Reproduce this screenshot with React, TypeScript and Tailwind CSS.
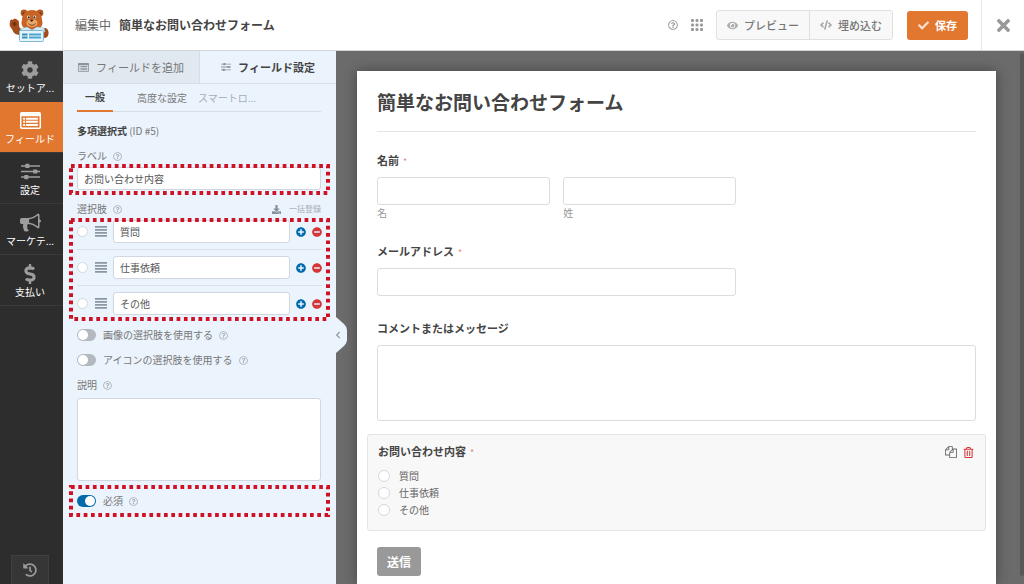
import React, { useState } from 'react';
import {
  FaCheck,
  FaChevronLeft,
  FaCode,
  FaCog,
  FaDollarSign,
  FaDownload,
  FaEye,
  FaHistory,
  FaMinusCircle,
  FaPlusCircle,
  FaRegQuestionCircle,
  FaRegTrashAlt,
  FaTimes,
} from 'react-icons/fa';

interface IconProps {
  className?: string;
}

const Mascot: React.FC = () => (
  <svg className="w-10 h-9" viewBox="0 0 40 36" aria-hidden="true">
    <circle cx="15" cy="6" r="3.4" fill="#b5591f" />
    <circle cx="31" cy="6" r="3.4" fill="#b5591f" />
    <circle cx="15" cy="6.5" r="1.6" fill="#7c3a14" />
    <circle cx="31" cy="6.5" r="1.6" fill="#7c3a14" />
    <path d="M1 15c0-3 2-3 3-2 1-2 4-1 4 0 2 0 2 2 2 5 0 2 1 4 3 4l-2 6c-5 0-7-3-8-6-2-2-3-4-2-7z" fill="#a34d1a" />
    <circle cx="5.500" cy="17" r="2" fill="#70340f" />
    <ellipse cx="36" cy="26" rx="3.6" ry="5" fill="#a34d1a" />
    <path d="M23 3c6 0 10 4 10 10 2 6-2 10-10 10s-12-4-10-10c0-6 4-10 10-10z" fill="#c86526" />
    <ellipse cx="23" cy="16" rx="5.500" ry="4" fill="#e9a868" />
    <circle cx="19.500" cy="10" r="1.5" fill="#fff" />
    <circle cx="25.500" cy="10" r="1.5" fill="#fff" />
    <circle cx="19.700" cy="10.2" r="1" fill="#2b1a10" />
    <circle cx="25.300" cy="10.2" r="1" fill="#2b1a10" />
    <path d="M20.5 12.5h4.4l-2.2 2.4z" fill="#43200d" />
    <path d="M19.5 16.5c2 2.4 5 2.4 7 0" fill="none" stroke="#7c3a14" strokeWidth="1" />
    <path d="M12 22l6-2 5 3 5-3 7 1 1 4H11z" fill="#d8ecf7" stroke="#8fc0da" strokeWidth=".6" />
    <rect x="10.500" y="23.500" width="24" height="11" rx="1" fill="#e4f4fb" stroke="#7fb8d6" />
    <path d="M13 27.500h5.500M13 30.500h5.500" stroke="#3c8dbc" strokeWidth="1.800" />
    <path d="M20 27.500h12M20 30.500h12" stroke="#4fa3cf" strokeWidth="1.800" />
  </svg>
);

const ListIcon: React.FC<IconProps> = ({ className }) => (
  <svg className={className} viewBox="0 0 20 16" fill="currentColor" aria-hidden="true">
    <path
      fillRule="evenodd"
      d="M1.500 0h17A1.500 1.500 0 0 1 20 1.500v13a1.500 1.500 0 0 1-1.500 1.500h-17A1.500 1.500 0 0 1 0 14.500v-13A1.500 1.500 0 0 1 1.500 0zM1.400 4v10.200c0 .3.100.4.400.4h16.400c.3 0 .4-.1.400-.4V4z"
    />
    <path d="M3 5.300h1.800V7.200H3zM5.600 5.300H17V7.200H5.600zM3 8.300h1.800v1.900H3zM5.600 8.300H17v1.900H5.600zM3 11.300h1.800v1.900H3zM5.600 11.300H17v1.900H5.600z" />
  </svg>
);

const SlidersIcon: React.FC<IconProps> = ({ className }) => (
  <svg className={className} viewBox="0 0 18 16" fill="currentColor" aria-hidden="true">
    <path d="M0 2h18v1.500H0zM0 7.300h18v1.500H0zM0 12.500h18V14H0z" />
    <rect x="4" y=".7" width="4" height="4" rx=".8" />
    <rect x="11.500" y="6" width="4" height="4" rx=".8" />
    <rect x="3" y="11.300" width="4" height="4" rx=".8" />
  </svg>
);

const BullhornIcon: React.FC<IconProps> = ({ className }) => (
  <svg className={className} viewBox="0 0 1792 1792" fill="currentColor" aria-hidden="true">
    <path d="M1664 640q53 0 90.5 37.5t37.5 90.5-37.5 90.5-90.5 37.5v384q0 52-38 90t-90 38q-417-347-812-380-58 19-91 66t-31 100.5 40 92.5q-20 33-23 65.5t6 58 33.5 55 48 50 61.5 50.5q-29 58-111.5 83t-168.5 11.5-132-55.5q-7-23-29.5-87.5t-32-94.5-23-89-15-101 3.5-98.5 22-110.5h-122q-66 0-113-47t-47-113v-192q0-66 47-113t113-47h480q435 0 896-384 52 0 90 38t38 90v384zm-128 604v-954q-394 302-768 343v270q377 42 768 341z" />
  </svg>
);

const CopyIcon: React.FC<IconProps> = ({ className }) => (
  <svg className={className} viewBox="0 0 1792 1792" fill="currentColor" aria-hidden="true">
    <path d="M1696 384q40 0 68 28t28 68v1216q0 40-28 68t-68 28h-960q-40 0-68-28t-28-68v-288h-544q-40 0-68-28t-28-68v-672q0-40 20-88t48-76l408-408q28-28 76-48t88-20h416q40 0 68 28t28 68v328q68-40 128-40h416zm-544 213l-299 299h299v-299zm-640-384l-299 299h299v-299zm196 647l316-316v-416h-384v416q0 40-28 68t-68 28h-416v640h512v-256q0-40 20-88t48-76zm956 804v-1152h-384v416q0 40-28 68t-68 28h-416v640h896z" />
  </svg>
);

const DragIcon: React.FC<IconProps> = ({ className }) => (
  <svg className={className} viewBox="0 0 12 11" fill="currentColor" aria-hidden="true">
    <path d="M0 0h12v1.700H0zM0 3h12v1.700H0zM0 6h12v1.700H0zM0 9h12v1.700H0z" />
  </svg>
);

const GridIcon: React.FC<IconProps> = ({ className }) => (
  <svg className={className} viewBox="0 0 12 12" fill="currentColor" aria-hidden="true">
    {[0, 4.5, 9].map(y => [0, 4.5, 9].map(x => <rect key={`${x}-${y}`} x={x} y={y} width="3" height="3" rx="1" />))}
  </svg>
);

const Help: React.FC = () => <FaRegQuestionCircle className="w-[9px] h-[9px] text-[#a9b2ba] shrink-0" />;

// Red dotted frame laid over a group of settings
const Marker: React.FC = () => (
  <svg className="absolute inset-0 w-full h-full pointer-events-none overflow-visible" aria-hidden="true">
    <rect
      x="2"
      y="2"
      fill="none"
      stroke="#cf1126"
      strokeWidth="4"
      strokeDasharray="3.7 3.6"
      style={{ width: 'calc(100% - 4px)', height: 'calc(100% - 4px)' }}
    />
  </svg>
);

const navItems = [
  { label: 'セットア...', icon: <FaCog className="w-[18px] h-[18px]" />, style: 'bg-[#393939] text-[#9d9d9d]' },
  { label: 'フィールド', icon: <ListIcon className="w-[21px] h-[17px]" />, style: 'bg-[#e27730] text-white' },
  { label: '設定', icon: <SlidersIcon className="w-[19px] h-[17px]" />, style: 'text-[#9d9d9d]' },
  { label: 'マーケテ...', icon: <BullhornIcon className="w-[21px] h-[21px]" />, style: 'text-[#9d9d9d]' },
  { label: '支払い', icon: <FaDollarSign className="w-5 h-5" />, style: 'text-[#9d9d9d]' },
];

const choices = ['質問', '仕事依頼', 'その他'];

const inputStyle = 'border border-[#d0d7de] rounded-[3px] bg-white text-[10px] text-[#555] focus:outline-none';
const previewInput = 'w-full h-7 border border-[#dcdcdc] rounded-[3px] bg-white focus:outline-none';
const previewLabel = 'block text-[11px] leading-4 font-bold text-[#444]';
const radioStyle = 'appearance-none shrink-0 border border-[#d5d9dd] rounded-full bg-white checked:bg-[#036aab]';

interface ToggleProps {
  id: string;
  label: string;
  initial?: boolean;
}

const Toggle: React.FC<ToggleProps> = ({ id, label, initial = false }) => {
  const [checked, setChecked] = useState(initial);

  return (
    <div className="flex items-center h-4">
      <input
        id={id}
        type="checkbox"
        checked={checked}
        onChange={e => setChecked(e.target.checked)}
        className="appearance-none w-[19px] h-3 rounded-full bg-[#b3b9bf] checked:bg-[#036aab] p-px before:block before:w-[10px] before:h-[10px] before:rounded-full before:bg-white checked:before:ml-[7px]"
      />
      <label htmlFor={id} className="ml-[7px] mr-[6px] text-[10px] leading-4 text-[#777]">{label}</label>
      <Help />
    </div>
  );
};

const Header: React.FC = () => (
  <header className="flex h-[51px] shrink-0 bg-white border-b border-[#d0d5da]">
    <div className="w-[63px] shrink-0 flex items-center justify-center pr-1 border-r border-[#e4e4e4]">
      <Mascot />
    </div>
    <div className="flex-1 flex items-center pl-3 text-[12px] text-[#666]">
      <span>編集中</span>
      <strong className="ml-2 text-[#444]">簡単なお問い合わせフォーム</strong>
    </div>
    <div className="flex items-center pr-[13px] text-[11px] text-[#777]">
      <button type="button" aria-label="ヘルプ" className="mr-[13px]"><FaRegQuestionCircle className="w-[10px] h-[10px] text-[#999]" /></button>
      <button type="button" aria-label="アプリ" className="mr-[13px]"><GridIcon className="w-3 h-3 text-[#999]" /></button>
      <div className="flex h-[30px] rounded-[3px] border border-[#e0e0e0] bg-[#f8f8f8] mr-[14px]">
        <button type="button" className="flex items-center gap-[6px] px-[10px] border-r border-[#e0e0e0] font-medium">
          <FaEye className="w-[11px] h-[11px] text-[#aaa]" />プレビュー
        </button>
        <button type="button" className="flex items-center gap-[6px] px-[10px] font-medium">
          <FaCode className="w-3 h-3 text-[#aaa]" />埋め込む
        </button>
      </div>
      <button type="button" className="flex items-center gap-[6px] h-[29px] px-[11px] rounded-[3px] bg-[#e27730] text-white font-bold">
        <FaCheck className="w-[11px] h-[11px] text-[#fbe3d3]" />保存
      </button>
    </div>
    <button type="button" aria-label="閉じる" className="w-[43px] flex items-center justify-center border-l border-[#e8e8e8] text-[#999]">
      <FaTimes className="w-[19px] h-[19px]" />
    </button>
  </header>
);

const Sidebar: React.FC = () => (
  <nav className="w-[63px] shrink-0 flex flex-col bg-[#2d2d2d]">
    {navItems.map(item => (
      <button key={item.label} type="button" className={`h-[51px] shrink-0 flex flex-col items-center border-b border-[#3a3a3a] pt-2 pr-[3px] ${item.style}`}>
        <span className="h-[21px] flex items-center">{item.icon}</span>
        <span className="text-[10px] leading-4 text-white whitespace-nowrap">{item.label}</span>
      </button>
    ))}
    <button type="button" aria-label="履歴" className="mt-auto ml-[11px] w-[38px] h-[29px] flex items-center justify-center bg-[#363636] text-[#999] border border-b-0 border-[#404040]">
      <FaHistory className="w-[14px] h-[14px]" />
    </button>
  </nav>
);

const FieldPanel: React.FC = () => (
  <section className="relative z-10 w-[273px] shrink-0 bg-[#ebf3fc] text-[10px] leading-4 text-[#777]">
    <div className="flex h-[33px] text-[11px]">
      <button type="button" className="w-[137px] flex items-center justify-center gap-[7px] bg-[#e0e8f0] border-b border-r border-[#d5dde5]">
        <ListIcon className="w-[11px] h-[9px] text-[#8b939b]" />フィールドを追加
      </button>
      <button type="button" className="flex-1 flex items-center justify-center gap-[7px] border-b border-[#d5dde5] font-bold text-[#444]">
        <SlidersIcon className="w-[10px] h-[10px] text-[#8b939b]" />フィールド設定
      </button>
    </div>

    <div className="pl-[14px] pr-[15px]">
      <div className="flex h-7 border-b border-[#d5dde5]">
        <button type="button" className="h-7 px-2 border-b-2 border-[#e27730] font-bold text-[#444]">一般</button>
        <button type="button" className="ml-6 mr-[11px]">高度な設定</button>
        <button type="button" className="text-[#a5adb5]">スマートロ...</button>
      </div>

      <h2 className="mt-[11px]"><b className="text-[#444]">多項選択式</b> (ID #5)</h2>

      <div className="mt-[9px] flex items-center gap-[6px]">
        <label htmlFor="field-label">ラベル</label>
        <Help />
      </div>
      <div className="relative -ml-2 -mr-[9px] pl-2 pr-[9px] pt-[3px] pb-[5px]">
        <input id="field-label" type="text" defaultValue="お問い合わせ内容" className={`block w-full h-[23px] px-[6px] ${inputStyle}`} />
        <Marker />
      </div>

      <div className="mt-[6px] flex items-center gap-[6px]">
        <span>選択肢</span>
        <Help />
        <button type="button" className="ml-auto flex items-center gap-2 text-[8px] text-[#a5adb5]">
          <FaDownload className="w-[9px] h-[9px] text-[#86919c]" />一括登録
        </button>
      </div>
      <div className="relative mt-px -ml-2 -mr-[9px] pl-2 pr-2">
        <ul className="divide-y divide-[#d9e2ea]">
          {choices.map((choice, i) => (
            <li key={choice} className={`flex items-center ${i === 0 ? 'h-8 pb-1' : i === 1 ? 'h-9' : 'h-[35px]'}`}>
              <input type="radio" name="default-choice" aria-label={`${choice}を初期値にする`} className={`w-[11px] h-[11px] ${radioStyle}`} />
              <DragIcon className="ml-[7px] mr-[6px] w-3 h-[11px] shrink-0 text-[#8b97a3]" />
              <input type="text" aria-label="選択肢" defaultValue={choice} className={`flex-1 min-w-0 h-[23px] px-[6px] ${inputStyle}`} />
              <button type="button" aria-label="追加" className="ml-[6px]"><FaPlusCircle className="w-[10px] h-[10px] text-[#036aab]" /></button>
              <button type="button" aria-label="削除" className="ml-[6px]"><FaMinusCircle className="w-[10px] h-[10px] text-[#d63638]" /></button>
            </li>
          ))}
        </ul>
        <Marker />
      </div>

      <div className="mt-[6px] flex flex-col gap-[9px]">
        <Toggle id="image-choices" label="画像の選択肢を使用する" />
        <Toggle id="icon-choices" label="アイコンの選択肢を使用する" />
        <div className="flex items-center gap-[6px]">
          <label htmlFor="description">説明</label>
          <Help />
        </div>
      </div>
      <textarea id="description" className={`block mt-[5px] w-full h-[83px] resize-none ${inputStyle}`} />

      <div className="relative mt-1 -ml-2 -mr-[9px] px-2 py-2">
        <Toggle id="required" label="必須" initial />
        <Marker />
      </div>
    </div>

    {/* パネルを閉じるつまみ */}
    <button type="button" aria-label="パネルを閉じる" className="absolute left-full top-[266px] w-[11px] h-9">
      <svg className="absolute inset-0 w-full h-full" viewBox="0 0 11 36" aria-hidden="true">
        <path d="M0 0l8 7q3 3 3 6v10q0 3-3 6l-8 7z" fill="#ebf3fc" />
      </svg>
      <FaChevronLeft className="relative -ml-[2px] w-2 h-2 text-[#8b97a3]" />
    </button>
  </section>
);

const Required: React.FC = () => <span className="ml-1 text-[9px] font-normal text-[#d63638]/60">*</span>;

const Preview: React.FC = () => (
  <main className="flex-1 min-w-0 flex bg-[#6b6b6b] overflow-hidden">
    <div className="flex-1 min-w-0 mt-5 ml-[21px] mr-6 px-[10px] bg-white shadow-[0_0_12px_rgba(0,0,0,0.35)]">
      <div className="px-[10px]">
        <h1 className="h-[61px] pt-4 border-b border-[#e5e5e5] text-[19px] leading-[30px] font-bold text-[#444]">簡単なお問い合わせフォーム</h1>

        <fieldset className="mt-5">
          <legend className={previewLabel}>名前<Required /></legend>
          <div className="mt-[7px] w-3/5 flex gap-[13px] text-[10px] leading-4 text-[#999]">
            <div className="flex-1">
              <input id="first-name" type="text" className={`block ${previewInput}`} />
              <label htmlFor="first-name">名</label>
            </div>
            <div className="flex-1">
              <input id="last-name" type="text" className={`block ${previewInput}`} />
              <label htmlFor="last-name">姓</label>
            </div>
          </div>
        </fieldset>

        <label htmlFor="email" className={`mt-[22px] ${previewLabel}`}>メールアドレス<Required /></label>
        <div className="mt-[7px] w-3/5">
          <input id="email" type="email" className={`block ${previewInput}`} />
        </div>

        <label htmlFor="message" className={`mt-6 ${previewLabel}`}>コメントまたはメッセージ</label>
        <textarea id="message" className="block mt-[9px] w-full h-[76px] border border-[#dcdcdc] rounded-[3px] bg-white resize-none focus:outline-none" />
      </div>

      <fieldset className="mt-[13px] h-[97px] px-[10px] pt-2 border border-[#e5e5e5] rounded-[3px] bg-[#f8f8f8]">
        <div className="flex items-center">
          <span className={previewLabel}>お問い合わせ内容<Required /></span>
          <div className="ml-auto mr-px flex items-center gap-[6px]">
            <button type="button" aria-label="複製"><CopyIcon className="w-3 h-3 text-[#666]" /></button>
            <button type="button" aria-label="削除"><FaRegTrashAlt className="w-[11px] h-[11px] text-[#d63638]" /></button>
          </div>
        </div>
        <div className="mt-[6px]">
          {choices.map(choice => (
            <label key={choice} className="flex items-center gap-[9px] h-[17px] text-[10px] text-[#666]">
              <input type="radio" name="inquiry" className={`w-3 h-3 ${radioStyle}`} />
              {choice}
            </label>
          ))}
        </div>
      </fieldset>

      <button type="button" className="mt-4 ml-[10px] h-[29px] px-[10px] rounded-[3px] bg-[#999] text-[12px] font-bold text-white">送信</button>
    </div>
    <div className="w-1 mt-[2px] mb-2 rounded-full bg-[#585858]" />
  </main>
);

const App: React.FC = () => {
  return (
    <div className="h-screen flex flex-col overflow-hidden font-['Noto_Sans_CJK_JP',sans-serif]">
      <Header />
      <div className="flex-1 min-h-0 flex">
        <Sidebar />
        <FieldPanel />
        <Preview />
      </div>
    </div>
  );
};

export default App;
